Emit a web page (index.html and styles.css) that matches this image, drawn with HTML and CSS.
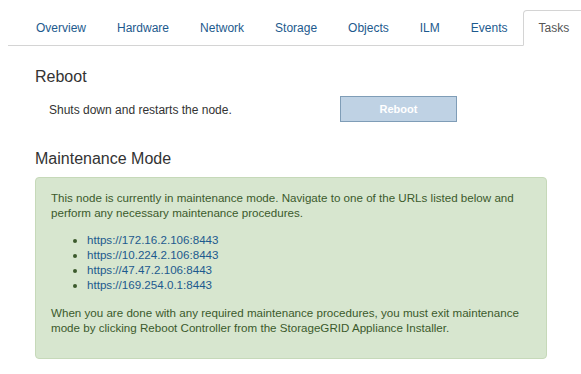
FILE: index.html
```html
<!DOCTYPE html>
<html lang="en">
<head>
    <meta charset="UTF-8">
    <meta name="viewport" content="width=device-width, initial-scale=1.0">
    <title>Node Tasks</title>
    <link rel="stylesheet" href="styles.css">
</head>
<body>
    <ul class="tabs">
        <li><a href="#">Overview</a></li>
        <li><a href="#">Hardware</a></li>
        <li><a href="#">Network</a></li>
        <li><a href="#">Storage</a></li>
        <li><a href="#">Objects</a></li>
        <li><a href="#">ILM</a></li>
        <li><a href="#">Events</a></li>
        <li class="active"><a href="#">Tasks</a></li>
    </ul>

    <div class="content">
        <h2 class="section-title">Reboot</h2>
        <div class="task-row">
            <span class="task-label">Shuts down and restarts the node.</span>
            <button class="btn-reboot" disabled>Reboot</button>
        </div>

        <h2 class="section-title maint-title">Maintenance Mode</h2>
        <div class="alert">
            <p>This node is currently in maintenance mode. Navigate to one of the URLs listed below and perform any necessary maintenance procedures.</p>
            <ul class="url-list">
                <li><a href="#">https://172.16.2.106:8443</a></li>
                <li><a href="#">https://10.224.2.106:8443</a></li>
                <li><a href="#">https://47.47.2.106:8443</a></li>
                <li><a href="#">https://169.254.0.1:8443</a></li>
            </ul>
            <p>When you are done with any required maintenance procedures, you must exit maintenance mode by clicking Reboot Controller from the StorageGRID Appliance Installer.</p>
        </div>
    </div>
</body>
</html>
```

FILE: styles.css
```css
body {
    margin: 0;
    font-family: "Liberation Sans", Arial, sans-serif;
    font-size: 12px;
    line-height: 15px;
    color: #333;
    background-color: #fff;
}
.tabs {
    display: flex;
    list-style: none;
    margin: 10px 2px 0 8px;
    padding: 0 0 0 13px;
    border-bottom: 1px solid #d4d4d4;
}
.tabs li {
    margin: 0 1px -1px 0;
}
.tabs a {
    display: block;
    padding: 9px 14px 8px;
    line-height: 17px;
    border: 1px solid transparent;
    border-radius: 4px 4px 0 0;
    color: #1d5a8e;
    text-decoration: none;
}
.tabs .active a {
    color: #555;
    background-color: #fff;
    border-color: #d4d4d4;
    border-bottom-color: #fff;
}
.content {
    padding: 0 34px 0 35px;
}
.section-title {
    margin: 22px 0 0;
    font-size: 16px;
    line-height: 18px;
    font-weight: normal;
    color: #333;
}
.maint-title {
    margin-top: 28px;
}
.task-row {
    display: grid;
    grid-template-columns: 291px 117px;
    align-items: center;
    margin-top: 10px;
    padding-left: 14px;
}
.task-label {
    padding-top: 2px;
}
.btn-reboot {
    height: 26px;
    padding: 0;
    font-family: inherit;
    font-size: 11px;
    font-weight: bold;
    color: #fff;
    background-color: #bfd2e4;
    border: 1px solid #7f9db7;
    border-radius: 0;
}
.alert {
    margin-top: 9px;
    padding: 12px 14px 23px 15px;
    background-color: #d7e6cf;
    border: 1px solid #c6d9b9;
    border-radius: 4px;
    color: #3b5a2c;
    font-size: 11.6px;
}
.alert p {
    margin: 0;
}
.url-list {
    margin: 12px 0 13px;
    padding-left: 36px;
}
.url-list a {
    color: #1d5a8e;
    text-decoration: none;
}
```
